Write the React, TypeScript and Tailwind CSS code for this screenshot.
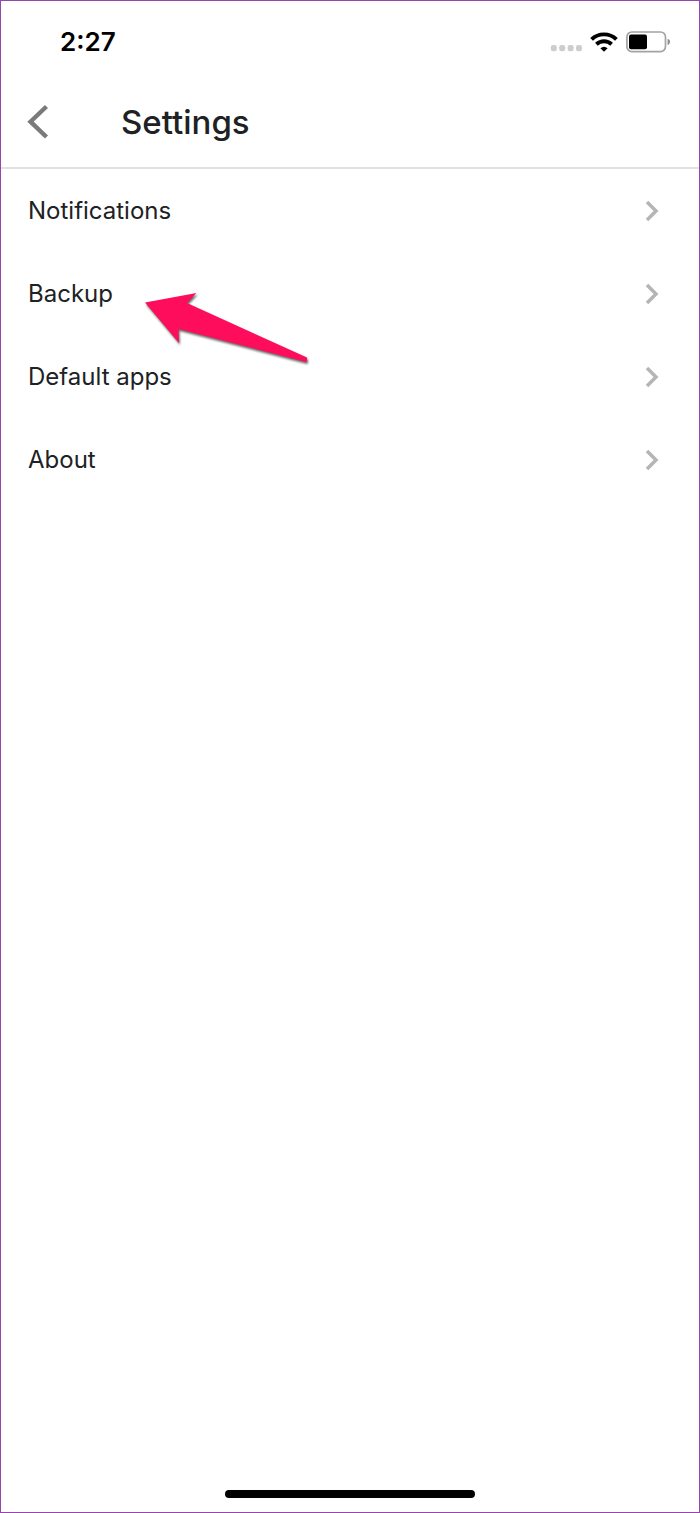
import React from "react";

const items: string[] = ["Notifications", "Backup", "Default apps", "About"];

function StatusIcons() {
  return (
    <div className="flex items-center">
      <svg className="mt-3 h-2 w-8" viewBox="0 0 32 8" fill="#cfcccd" aria-hidden="true">
        <rect x="0.8" y="1" width="6" height="6.2" rx="2.2" />
        <rect x="9.2" y="1" width="6" height="6.2" rx="2.2" />
        <rect x="17.6" y="1" width="6" height="6.2" rx="2.2" />
        <rect x="26" y="1" width="6" height="6.2" rx="2.2" />
      </svg>
      <svg className="ml-2 h-5 w-7" viewBox="0 0 28 20" aria-hidden="true">
        <g fill="none" stroke="#000" strokeWidth="3.9">
          <path d="M1.6 7.3C8.4 0.7 19.6 0.7 26.4 7.3" />
          <path d="M6.4 12.2C10.8 8.2 17.2 8.2 21.6 12.2" />
        </g>
        <path d="M10.400 16.300Q14 13.300 17.600 16.300L14 19.800Z" fill="#000" />
      </svg>
      <svg className="ml-2 h-6 w-11" viewBox="0 0 44 24" aria-hidden="true">
        <rect x="0.9" y="2" width="38.6" height="19.6" rx="5" fill="none" stroke="#a3a3a3" strokeWidth="1.7" />
        <rect x="3" y="4.6" width="18" height="14.6" rx="2" fill="#000" />
        <path d="M41.6 8.8Q44.4 10 44 12Q43.8 14.4 41.6 15.2Z" fill="#8c8c8c" />
      </svg>
    </div>
  );
}

function Pointer() {
  return (
    <svg
      className="pointer-events-none absolute top-8 left-35 z-10 h-22 w-44 drop-shadow-[1px_2px_1px_rgba(0,0,0,0.6)]"
      viewBox="0 0 176 88"
      aria-hidden="true"
    >
      <path d="M4 18.500L55.500 9L46 19L166 73.500V77L165 78L37.500 45L38 59Z" fill="#ff0d5d" />
    </svg>
  );
}

export default function App() {
  return (
    <div className="flex min-h-screen flex-col border border-[#9545ac] bg-white font-['Inter','Liberation_Sans',sans-serif] text-[#202124]">
      <div className="flex h-[82px] items-center justify-between pr-[29px] pl-[59px]">
        <time className="text-[26px] leading-8 font-semibold text-black">2:27</time>
        <StatusIcons />
      </div>
      <header className="flex h-[86px] items-center border-b-2 border-[#e1e1e1] pb-1.5 pl-6">
        <button type="button" aria-label="Back" className="flex h-12 w-12 items-center">
          <svg className="h-9 w-6" viewBox="0 0 24 36" fill="none" stroke="#7a7a7a" strokeWidth="4.400" aria-hidden="true">
            <path d="M21.500 2.500L5.500 17.700L21.500 33" />
          </svg>
        </button>
        <h1 className="ml-12 text-[33px] leading-10 font-medium">Settings</h1>
      </header>
      <main className="grow">
        <ul>
          {items.map((item) => (
            <li key={item} className="relative">
              <button type="button" className="flex h-[83px] w-full items-center justify-between pr-10 pl-[27px] text-left text-2xl">
                <span>{item}</span>
                <svg className="h-6 w-4" viewBox="0 0 16 24" fill="none" stroke="#b5b5b5" strokeWidth="3.500" aria-hidden="true">
                  <path d="M4 3L13 12L4 21" />
                </svg>
              </button>
              {item === "Backup" && <Pointer />}
            </li>
          ))}
        </ul>
      </main>
      <div className="mx-auto mb-3.5 h-2 w-[250px] rounded-full bg-black" />
    </div>
  );
}
